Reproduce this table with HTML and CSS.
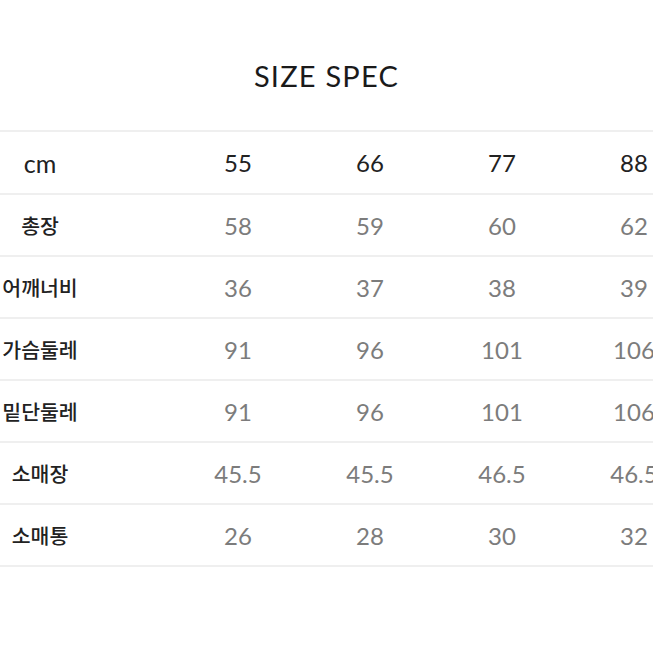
FILE: index.html
```html
<!DOCTYPE html>
<html lang="ko">
<head>
<meta charset="utf-8">
<title>SIZE SPEC</title>
<link rel="stylesheet" href="styles.css">
</head>
<body>
<div class="page">
  <h1 class="title">SIZE SPEC</h1>
  <div class="table">
    <div class="row head"><div class="label latin">cm</div><div class="val">55</div><div class="val">66</div><div class="val">77</div><div class="val">88</div></div>
    <div class="row"><div class="label">총장</div><div class="val">58</div><div class="val">59</div><div class="val">60</div><div class="val">62</div></div>
    <div class="row"><div class="label">어깨너비</div><div class="val">36</div><div class="val">37</div><div class="val">38</div><div class="val">39</div></div>
    <div class="row"><div class="label">가슴둘레</div><div class="val">91</div><div class="val">96</div><div class="val">101</div><div class="val">106</div></div>
    <div class="row"><div class="label">밑단둘레</div><div class="val">91</div><div class="val">96</div><div class="val">101</div><div class="val">106</div></div>
    <div class="row"><div class="label">소매장</div><div class="val">45.5</div><div class="val">45.5</div><div class="val">46.5</div><div class="val">46.5</div></div>
    <div class="row"><div class="label">소매통</div><div class="val">26</div><div class="val">28</div><div class="val">30</div><div class="val">32</div></div>
  </div>
</div>
</body>
</html>
```

FILE: styles.css
```css
html, body {
  margin: 0;
  padding: 0;
  background: #ffffff;
}
body {
  width: 653px;
  height: 653px;
  overflow: hidden;
  font-family: Lato, "Noto Sans", "Noto Sans CJK KR", sans-serif;
}
.page {
  width: 700px;
}
.title {
  margin: 0;
  width: 653px;
  box-sizing: border-box;
  height: 130px;
  padding-top: 55px;
  line-height: 42px;
  font-size: 29px;
  font-weight: 400;
  color: #1a1a1a;
  text-align: center;
  letter-spacing: 1.2px;
}
.table {
  border-top: 2px solid #efefef;
  box-sizing: border-box;
}
.row {
  display: grid;
  grid-template-columns: 172px repeat(4, 132px);
  height: 62px;
  box-sizing: border-box;
  border-bottom: 2px solid #efefef;
  align-items: center;
}
.row:first-child {
  height: 63px;
}
.label {
  width: 80px;
  text-align: center;
  font-family: "Noto Sans CJK KR", sans-serif;
  font-size: 20.5px;
  font-weight: 500;
  color: #222;
  white-space: nowrap;
}
.label.latin {
  font-family: Lato, "Noto Sans", sans-serif;
  font-size: 25px;
  font-weight: 400;
}
.val {
  text-align: center;
  font-size: 24px;
  font-weight: 400;
  color: #7c7c7c;
}
.head .val {
  color: #222;
}
```
